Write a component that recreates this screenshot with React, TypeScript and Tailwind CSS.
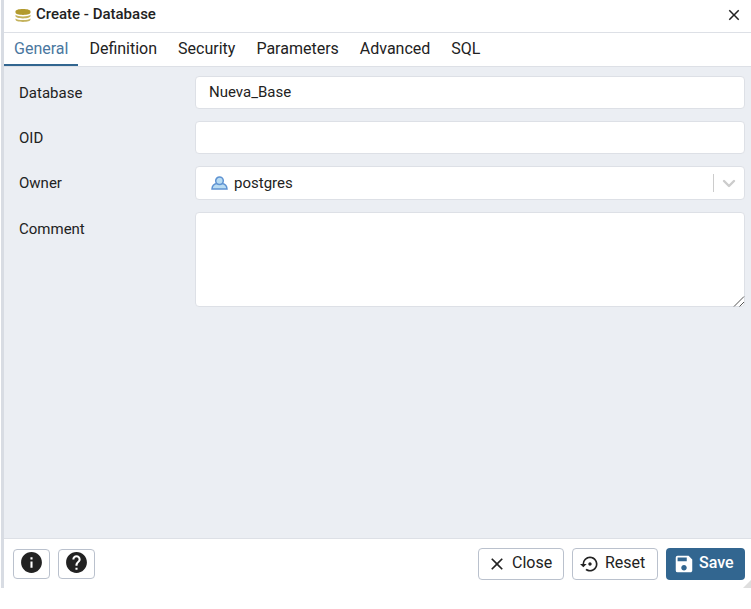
import { useState } from "react";
import type { ReactNode } from "react";
import { MdClose, MdHelp, MdInfo, MdSave, MdSettingsBackupRestore } from "react-icons/md";

const tabs = ["General", "Definition", "Security", "Parameters", "Advanced", "SQL"];

function DatabaseIcon() {
  return (
    <svg viewBox="0 0 16 16" className="size-4 shrink-0" aria-hidden="true">
      <path d="M.5 3.400C.5 1.900 3.500 1 8 1s7.500.9 7.500 2.400v1.200C15.500 6 12.500 7 8 7S.5 6 .5 4.600z" fill="#b29a2e" />
      <path d="M.5 6.800c1.300 1.100 4.200 1.700 7.500 1.700s6.200-.6 7.500-1.700v1.200c0 1.400-3 2.400-7.500 2.400S.5 9.400.5 8z" fill="#c4b25c" />
      <path d="M.5 10.400c1.300 1.100 4.200 1.700 7.500 1.700s6.200-.6 7.500-1.700v1.200c0 1.400-3 2.400-7.500 2.400S.5 13 .5 11.600z" fill="#c4b25c" />
    </svg>
  );
}

function RoleIcon() {
  return (
    <svg viewBox="0 0 17 14" className="h-3.5 w-[17px]" aria-hidden="true">
      <path d="M1 13c.2-3.300 2-5 4.800-5.400h5.400c2.800.4 4.600 2.100 4.800 5.400z" fill="#b9dcf3" stroke="#5f93d2" strokeWidth="1.500" />
      <circle cx="8.500" cy="4.800" r="3.800" fill="#b9dcf3" stroke="#5f93d2" strokeWidth="1.500" />
    </svg>
  );
}

function Field({ id, label, children }: { id: string; label: string; children: ReactNode }) {
  return (
    <div className="grid grid-cols-[176px_1fr] items-start">
      <label htmlFor={id} className="pt-[7px] leading-5">
        {label}
      </label>
      {children}
    </div>
  );
}

const box = "w-full rounded border border-[#dde0e6] bg-white outline-none";
const outlined = "flex items-center rounded border border-[#bac1cd] bg-white";

export default function App() {
  const [active, setActive] = useState("General");
  const [name, setName] = useState("Nueva_Base");

  return (
    <div className="min-h-screen bg-white pl-px font-['Roboto','Liberation_Sans',sans-serif] text-base text-[#222]">
      <section className="relative border-l-3 border-[#d8dce3]" aria-label="Create - Database">
        <header className="flex h-[33px] items-center gap-[5px] border-b border-[#dde0e6] pr-2 pl-[11px]">
          <DatabaseIcon />
          <h1 className="flex-1 pb-1 text-[15px] leading-6 font-medium">Create - Database</h1>
          <button type="button" aria-label="Close dialog" className="pb-0.5">
            <MdClose className="size-[18px]" />
          </button>
        </header>

        <nav role="tablist" className="flex h-[34px] gap-px border-b border-[#dde0e6]">
          {tabs.map((tab) => (
            <button
              key={tab}
              type="button"
              role="tab"
              aria-selected={tab === active}
              onClick={() => setActive(tab)}
              className={`border-b-2 px-2.5 ${tab === active ? "border-[#326690] text-[#4a77a0]" : "border-transparent"}`}
            >
              {tab}
            </button>
          ))}
        </nav>

        <main className="flex h-[472px] flex-col gap-3 border-b border-[#dde0e6] bg-[#ebeef3] py-[9px] pr-1.5 pl-[15px] text-[15px]">
          <Field id="database" label="Database">
            <input id="database" value={name} onChange={(e) => setName(e.target.value)} className={`${box} h-[33px] px-[13px] pb-0.5`} />
          </Field>
          <Field id="oid" label="OID">
            <input id="oid" className={`${box} h-[33px] px-[13px]`} />
          </Field>
          <Field id="owner" label="Owner">
            <div className="relative">
              <select id="owner" className={`${box} block h-[34px] appearance-none pl-[38px]`}>
                <option>postgres</option>
              </select>
              <span className="pointer-events-none absolute inset-y-0 left-4 flex items-center">
                <RoleIcon />
              </span>
              <span className="pointer-events-none absolute inset-y-0 right-[9px] flex items-center gap-2">
                <span className="h-[18px] w-px bg-[#ccc]" />
                <svg viewBox="0 0 14 14" className="size-3.5" fill="none" stroke="#ccc" strokeWidth="2.400" strokeLinecap="round" strokeLinejoin="round" aria-hidden="true">
                  <path d="m2 5 5 5 5-5" />
                </svg>
              </span>
            </div>
          </Field>
          <Field id="comment" label="Comment">
            <div className="relative">
              <textarea id="comment" className={`${box} block h-[95px] resize-y px-3 py-1 [&::-webkit-resizer]:bg-transparent`} />
              <svg viewBox="0 0 12 12" className="pointer-events-none absolute right-0 bottom-0 size-3" fill="none" stroke="#555" aria-hidden="true">
                <path d="M1 11.500 11 1.500M6.500 11.500l4.500-4.500" />
              </svg>
            </div>
          </Field>
        </main>

        <footer className="flex h-[49px] items-center gap-2 pr-1.5 pl-[9px]">
          <button type="button" aria-label="Information" className={`${outlined} h-[30px] w-[37px] justify-center pb-0.5`}>
            <MdInfo className="size-[25px]" />
          </button>
          <button type="button" aria-label="Help" className={`${outlined} h-[30px] w-[37px] justify-center pb-0.5`}>
            <MdHelp className="size-[25px]" />
          </button>
          <span className="flex-1" />
          <button type="button" className={`${outlined} h-8 w-[86px] gap-[5px] pl-2`}>
            <MdClose className="size-5" />
            <span className="pb-0.5">Close</span>
          </button>
          <button type="button" className={`${outlined} h-8 w-[86px] gap-[5px] pl-[7px]`}>
            <MdSettingsBackupRestore className="size-5" />
            <span className="pb-0.5">Reset</span>
          </button>
          <button type="button" className="flex h-8 w-[79px] items-center gap-1 rounded bg-[#326690] pl-[7px] font-medium text-white">
            <MdSave className="size-[22px]" />
            <span className="pb-0.5">Save</span>
          </button>
        </footer>
        <svg viewBox="0 0 8 8" className="absolute right-0 bottom-0 size-2" aria-hidden="true">
          <path d="M8 0v8H0z" fill="#dedede" />
        </svg>
      </section>
    </div>
  );
}
